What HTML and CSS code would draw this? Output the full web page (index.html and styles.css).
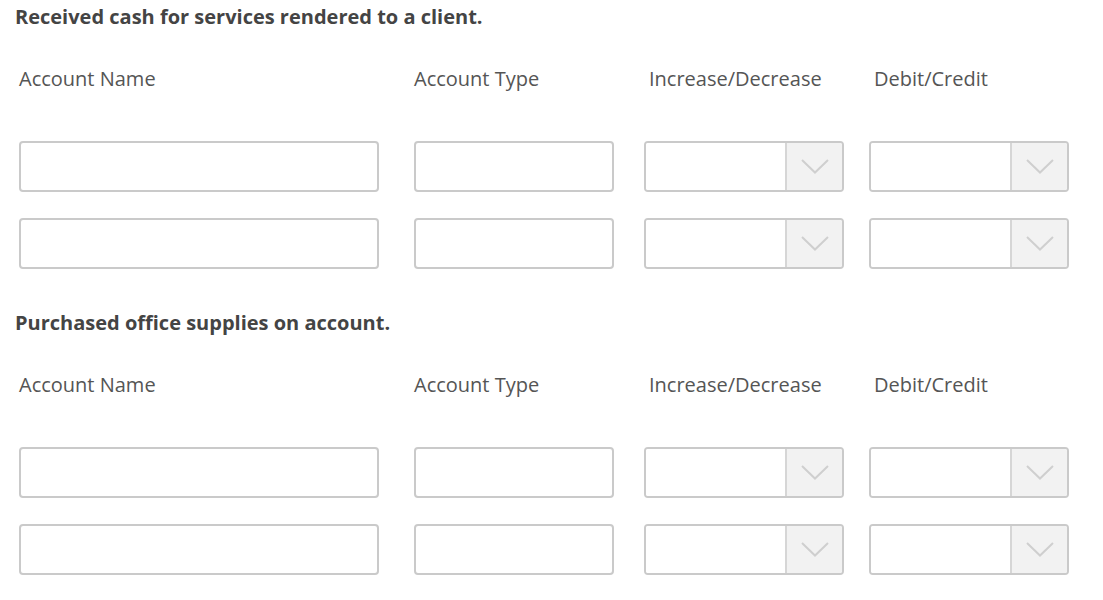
FILE: index.html
```html
<!DOCTYPE html>
<html lang="en">
<head>
    <meta charset="UTF-8">
    <meta name="viewport" content="width=device-width, initial-scale=1.0">
    <title>Journal Entries</title>
    <link rel="stylesheet" href="styles.css">
</head>
<body>
    <div class="entry">
        <h2 class="prompt">Received cash for services rendered to a client.</h2>
        <div class="grid">
            <div class="label">Account Name</div>
            <div class="label">Account Type</div>
            <div class="label shift">Increase/Decrease</div>
            <div class="label shift">Debit/Credit</div>

            <input class="field wide" type="text">
            <input class="field" type="text">
            <div class="select"><div class="value"></div><div class="arrow"><svg width="28" height="15" viewBox="0 0 28 15"><polyline points="1,1 14,13.5 27,1" /></svg></div></div>
            <div class="select"><div class="value"></div><div class="arrow"><svg width="28" height="15" viewBox="0 0 28 15"><polyline points="1,1 14,13.5 27,1" /></svg></div></div>

            <input class="field wide" type="text">
            <input class="field" type="text">
            <div class="select"><div class="value"></div><div class="arrow"><svg width="28" height="15" viewBox="0 0 28 15"><polyline points="1,1 14,13.5 27,1" /></svg></div></div>
            <div class="select"><div class="value"></div><div class="arrow"><svg width="28" height="15" viewBox="0 0 28 15"><polyline points="1,1 14,13.5 27,1" /></svg></div></div>
        </div>
    </div>

    <div class="entry">
        <h2 class="prompt">Purchased office supplies on account.</h2>
        <div class="grid">
            <div class="label">Account Name</div>
            <div class="label">Account Type</div>
            <div class="label shift">Increase/Decrease</div>
            <div class="label shift">Debit/Credit</div>

            <input class="field wide" type="text">
            <input class="field" type="text">
            <div class="select"><div class="value"></div><div class="arrow"><svg width="28" height="15" viewBox="0 0 28 15"><polyline points="1,1 14,13.5 27,1" /></svg></div></div>
            <div class="select"><div class="value"></div><div class="arrow"><svg width="28" height="15" viewBox="0 0 28 15"><polyline points="1,1 14,13.5 27,1" /></svg></div></div>

            <input class="field wide" type="text">
            <input class="field" type="text">
            <div class="select"><div class="value"></div><div class="arrow"><svg width="28" height="15" viewBox="0 0 28 15"><polyline points="1,1 14,13.5 27,1" /></svg></div></div>
            <div class="select"><div class="value"></div><div class="arrow"><svg width="28" height="15" viewBox="0 0 28 15"><polyline points="1,1 14,13.5 27,1" /></svg></div></div>
        </div>
    </div>
</body>
</html>
```

FILE: styles.css
```css
body {
    margin: 0;
    padding: 5px 15px 0;
    background: #fff;
    font-family: "Open Sans", Arial, sans-serif;
    color: #555;
}

.entry {
    margin-bottom: 42px;
}

.prompt {
    margin: 0;
    font-size: 20px;
    line-height: 24px;
    font-weight: bold;
    color: #444;
}

.grid {
    display: grid;
    grid-template-columns: 395px 230px 225px 200px;
    grid-template-rows: 48px 51px 51px;
    row-gap: 26px;
    margin-left: 4px;
    margin-top: 38px;
}

.label {
    font-size: 20px;
    line-height: 24px;
}

.label.shift {
    padding-left: 5px;
}

.field {
    box-sizing: border-box;
    width: 200px;
    height: 51px;
    margin: 0;
    padding: 0 10px;
    border: 2px solid #cacaca;
    border-radius: 4px;
    background: #fff;
    font-family: inherit;
    font-size: 16px;
    outline: none;
}

.field.wide {
    width: 360px;
}

.select {
    box-sizing: border-box;
    display: flex;
    width: 200px;
    height: 51px;
    border: 2px solid #cacaca;
    border-radius: 4px;
    overflow: hidden;
}

.select .value {
    flex: 1;
    background: #fff;
}

.select .arrow {
    width: 55px;
    display: flex;
    align-items: center;
    justify-content: center;
    border-left: 2px solid #d6d6d6;
    background: #f2f2f2;
}

.arrow polyline {
    fill: none;
    stroke: #cfcfcf;
    stroke-width: 2;
}
```
